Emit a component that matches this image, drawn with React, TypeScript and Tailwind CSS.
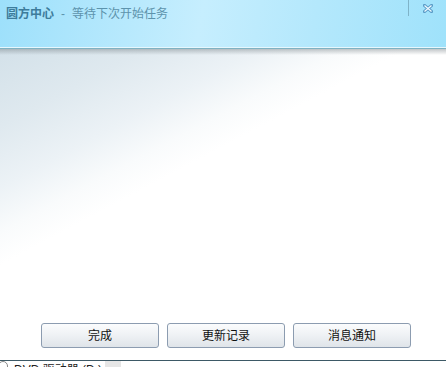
export default function App() {
	const font = { fontFamily: '"Liberation Sans", "Noto Sans CJK SC", sans-serif' };

	return (
		<div className="w-[446px] h-[367px] overflow-hidden bg-white flex flex-col" style={font}>
			{/* Title bar */}
			<div className="relative h-[47px] shrink-0 bg-[linear-gradient(100deg,#9de0fb_0%,#c6eefe_45%,#b4e8fc_70%,#9fe2fb_100%)] flex items-start">
				<div className="flex items-center pl-[6px] pt-[6px] text-[12px] leading-[16px]">
					<span className="font-bold text-[#3d7c9b]">圆方中心</span>
					<span className="ml-[7px] text-[#5d93ac]">-</span>
					<span className="ml-[7px] text-[#5d93ac]">等待下次开始任务</span>
				</div>
				<div className="ml-auto flex items-start h-[16px]">
					<div className="w-px h-[16px] bg-[#7fb3c8]" />
					<button className="w-[37px] h-[16px] flex items-center justify-center">
						<svg width="10" height="9" viewBox="0 0 10 9">
							<path d="M1.5 1.5 L8.5 7.5 M8.5 1.5 L1.5 7.5" stroke="#5a9cc8" strokeWidth="3.2" strokeLinecap="square" />
							<path d="M1.5 1.5 L8.5 7.5 M8.5 1.5 L1.5 7.5" stroke="#f0faff" strokeWidth="1.2" />
						</svg>
					</button>
				</div>
			</div>
			<div className="h-px shrink-0 bg-[#e6f7fd]" />
			<div className="h-px shrink-0 bg-[#7fb2c2]" />

			{/* Body */}
			<div className="relative flex-1 flex flex-col bg-[linear-gradient(152deg,#d3e1e9_0%,#dfe9ef_14%,#ecf2f6_25%,#f9fbfc_33%,#ffffff_39%)]">
				<div className="absolute inset-x-0 top-0 h-[6px] bg-[linear-gradient(to_bottom,rgba(120,130,135,0.45),rgba(120,130,135,0))]" />
				<div className="flex-1" />
				<div className="flex gap-[8px] pl-[41px] pb-[12px]">
					{["完成", "更新记录", "消息通知"].map((t) => (
						<button
							key={t}
							className="w-[118px] h-[25px] rounded-[3px] border border-[#8c9cb0] bg-[linear-gradient(to_bottom,#fbfcfd_0%,#eef1f4_50%,#dfe4e9_100%)] text-[12px] text-[#111] flex items-center justify-center"
						>
							{t}
						</button>
					))}
				</div>
				<div className="h-px bg-[#3d5966]" />
				<div className="h-[6px] overflow-hidden flex items-start bg-white">
					<div className="relative w-[10px] h-[12px] ml-[-2px] rounded-full border border-[#8a8a8a]" />
					<span className="ml-[6px] mt-[2px] text-[12px] leading-[14px] text-[#222]">DVD 驱动器 (D:)</span>
					<div className="ml-[3px] w-[16px] h-[6px] bg-[#e6e6e6]" />
				</div>
			</div>
		</div>
	);
}
